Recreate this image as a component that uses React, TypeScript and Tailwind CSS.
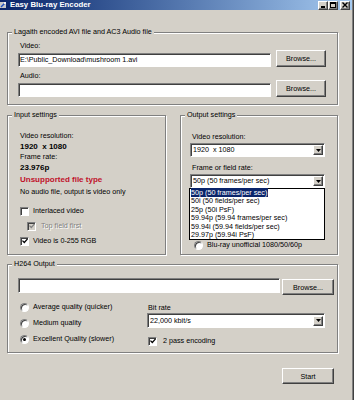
import React from "react";

const field =
  "bg-white border border-t-[#808080] border-l-[#808080] border-b-white border-r-white shadow-[inset_1px_1px_0_#404040]";
const raised =
  "bg-[#d4d0c8] border border-t-white border-l-white border-b-[#404040] border-r-[#404040] shadow-[inset_-1px_-1px_0_#808080]";

function Group({
  label,
  className = "",
  children,
}: {
  label: string;
  className?: string;
  children?: React.ReactNode;
}) {
  return (
    <div
      className={`relative border border-[#808080] shadow-[inset_1px_1px_0_#ffffff,1px_1px_0_#ffffff] ${className}`}
    >
      <span className="absolute left-[4px] top-[-6px] bg-[#d4d0c8] px-[2px] leading-[9px] whitespace-nowrap">
        {label}
      </span>
      {children}
    </div>
  );
}

function Button({ children, className = "" }: { children: React.ReactNode; className?: string }) {
  return (
    <div className={`${raised} flex items-center justify-center leading-[9px] ${className}`}>{children}</div>
  );
}

function Select({ value, className = "" }: { value: string; className?: string }) {
  return (
    <div className={`${field} flex items-center ${className}`}>
      <span className="flex-1 pl-[2px] leading-[10px] whitespace-pre overflow-hidden">{value}</span>
      <div className={`${raised} w-[10px] h-[10px] mr-[1px] flex items-center justify-center`}>
        <svg width="5" height="3" viewBox="0 0 5 3">
          <path d="M0 0H5L2.5 3Z" fill="#000" />
        </svg>
      </div>
    </div>
  );
}

function Check({ checked, disabled }: { checked?: boolean; disabled?: boolean }) {
  return (
    <div
      className={`w-[9px] h-[9px] shrink-0 ${
        disabled ? "bg-[#d4d0c8]" : "bg-white"
      } border border-t-[#808080] border-l-[#808080] border-b-white border-r-white shadow-[inset_1px_1px_0_#404040] flex items-center justify-center`}
    >
      {checked && (
        <svg width="6" height="6" viewBox="0 0 7 7">
          <path d="M0.5 3L2.7 5.3L6.5 1" stroke={disabled ? "#808080" : "#000"} strokeWidth="1.5" fill="none" />
        </svg>
      )}
    </div>
  );
}

function Radio({ checked }: { checked?: boolean }) {
  return (
    <div className="w-[9px] h-[9px] shrink-0 rounded-full bg-white border border-t-[#808080] border-l-[#808080] border-b-white border-r-white shadow-[inset_1px_1px_0_#404040] flex items-center justify-center">
      {checked && <div className="w-[3px] h-[3px] rounded-full bg-black" />}
    </div>
  );
}

function CapBtn({ children, className = "" }: { children: React.ReactNode; className?: string }) {
  return (
    <div className={`${raised} w-[10px] h-[9px] flex items-center justify-center ${className}`}>{children}</div>
  );
}

export default function App() {
  return (
    <div className="w-[354px] h-[400px] bg-[#d4d0c8] text-[7.2px] text-black overflow-hidden flex font-['Liberation_Sans',Arial,sans-serif]">
      <div className="w-[352px] flex flex-col">
        {/* Title bar */}
        <div className="h-[10px] bg-linear-to-r from-[#0a246a] to-[#a6caf0] flex items-center">
          <svg width="7" height="8" viewBox="0 0 7 8" className="shrink-0">
            <rect x="0" y="1" width="6" height="6" fill="#c8c8c8" />
            <path d="M1 6L5 2" stroke="#2050c0" strokeWidth="1.5" />
            <rect x="4" y="1" width="2" height="2" fill="#f0f0f0" />
          </svg>
          <span className="ml-[3px] text-white font-bold text-[7.8px] leading-[10px] whitespace-nowrap">
            Easy Blu-ray Encoder
          </span>
          <div className="ml-auto mr-[2px] flex items-center">
            <CapBtn>
              <svg width="5" height="6" viewBox="0 0 5 6">
                <rect x="0" y="4" width="4" height="2" fill="#000" />
              </svg>
            </CapBtn>
            <CapBtn>
              <svg width="6" height="6" viewBox="0 0 6 6">
                <rect x="0.5" y="0.5" width="5" height="5" fill="none" stroke="#000" />
                <rect x="0" y="0" width="6" height="2" fill="#000" />
              </svg>
            </CapBtn>
            <CapBtn className="ml-[2px]">
              <svg width="6" height="6" viewBox="0 0 6 6">
                <path d="M0.5 0.5L5.5 5.5M5.5 0.5L0.5 5.5" stroke="#000" strokeWidth="1.4" />
              </svg>
            </CapBtn>
          </div>
        </div>

        <div className="flex flex-col pl-[7px]">
          {/* Group 1 */}
          <Group
            label="Lagaith encoded AVI file and AC3 Audio file"
            className="mt-[22px] w-[331px] h-[73px] pt-[8px] pl-[10px] pr-[11px] flex flex-col"
          >
            <div className="ml-[2px] leading-[9px] h-[9px]">Video:</div>
            <div className="flex items-end gap-[5px] h-[17px]">
              <div className={`${field} flex-1 h-[14px] leading-[12px] pl-[1px] whitespace-nowrap`}>
                {"E:\\Public_Download\\mushroom 1.avi"}
              </div>
              <Button className="w-[50px] h-[17px]">Browse...</Button>
            </div>
            <div className="ml-[2px] mt-[4px] leading-[9px] h-[9px]">Audio:</div>
            <div className="flex items-end gap-[5px] h-[17px]">
              <div className={`${field} flex-1 h-[14px]`} />
              <Button className="w-[50px] h-[17px]">Browse...</Button>
            </div>
          </Group>

          {/* Row of two groups */}
          <div className="mt-[10px] flex gap-[14px]">
            <Group label="Input settings" className="w-[159px] h-[140px] pt-[14px] pl-[12px] flex flex-col">
              <div className="h-[11px] leading-[11px]">Video resolution:</div>
              <div className="h-[11px] leading-[11px] font-bold text-[8px] whitespace-pre">1920  x 1080</div>
              <div className="h-[10px] leading-[10px]">Frame rate:</div>
              <div className="h-[11px] leading-[11px] font-bold text-[8px]">23.976p</div>
              <div className="mt-[1px] h-[11px] leading-[11px] font-bold text-[8px] text-[#c0102a]">
                Unsupported file type
              </div>
              <div className="mt-[1px] h-[11px] leading-[11px]">No audio file, output is video only</div>
              <div className="mt-[9px] h-[10px] flex items-center gap-[4px]">
                <Check />
                <span className="leading-[10px]">Interlaced video</span>
              </div>
              <div className="mt-[5px] h-[10px] flex items-center gap-[5px] pl-[7px]">
                <Check checked disabled />
                <span className="leading-[10px] text-[#808080] [text-shadow:1px_1px_0_#fff]">Top field first</span>
              </div>
              <div className="mt-[5px] h-[10px] flex items-center gap-[4px]">
                <Check checked />
                <span className="leading-[10px]">Video is 0-255 RGB</span>
              </div>
            </Group>

            <Group label="Output settings" className="w-[158px] h-[140px] pt-[16px] pl-[9px] pr-[12px] flex flex-col">
              <div className="ml-[2px] h-[10px] leading-[10px]">Video resolution:</div>
              <Select value="1920  x 1080" className="mt-[1px] h-[14px]" />
              <div className="ml-[2px] mt-[6px] h-[10px] leading-[10px]">Frame or field rate:</div>
              <div className="relative mt-[1px]">
                <Select value="50p (50 frames/per sec)" className="h-[14px]" />
                <div className="absolute left-[-1px] right-0 top-full h-[52px] bg-white border border-black z-10 flex flex-col leading-[8.4px] whitespace-nowrap">
                  <div className="pl-[1px]">
                    <span className="bg-[#0a246a] text-white pr-[1px]">50p (50 frames/per sec)</span>
                  </div>
                  <div className="pl-[1px]">50i (50 fields/per sec)</div>
                  <div className="pl-[1px]">25p (50i PsF)</div>
                  <div className="pl-[1px]">59.94p (59.94 frames/per sec)</div>
                  <div className="pl-[1px]">59.94i (59.94 fields/per sec)</div>
                  <div className="pl-[1px]">29.97p (59.94i PsF)</div>
                </div>
              </div>
              <div className="mt-[52px] h-[10px] flex items-center gap-[4px] pl-[4px]">
                <Radio />
                <span className="leading-[10px] whitespace-nowrap">Blu-ray unofficial 1080/50/60p</span>
              </div>
            </Group>
          </div>

          {/* H264 */}
          <Group label="H264 Output" className="mt-[9px] w-[331px] h-[89px] pt-[13px] pl-[10px] pr-[3px] flex flex-col">
            <div className="flex items-start gap-[2px]">
              <div className={`${field} flex-1 h-[15px]`} />
              <Button className="mt-[1px] w-[52px] h-[16px]">Browse...</Button>
            </div>
            <div className="mt-[7px] flex">
              <div className="w-[127px] ml-[2px] flex flex-col gap-[6px]">
                <div className="h-[10px] flex items-center gap-[4px]">
                  <Radio />
                  <span className="leading-[10px]">Average quality (quicker)</span>
                </div>
                <div className="h-[10px] flex items-center gap-[4px]">
                  <Radio />
                  <span className="leading-[10px]">Medium quality</span>
                </div>
                <div className="h-[10px] flex items-center gap-[4px]">
                  <Radio checked />
                  <span className="leading-[10px]">Excellent Quality (slower)</span>
                </div>
              </div>
              <div className="w-[178px] flex flex-col">
                <div className="ml-[1px] mt-[1px] h-[10px] leading-[10px]">Bit rate</div>
                <Select value="22,000 kbit/s" className="h-[15px]" />
                <div className="mt-[8px] ml-[1px] h-[10px] flex items-center gap-[6px]">
                  <Check checked />
                  <span className="leading-[10px]">2 pass encoding</span>
                </div>
              </div>
            </div>
          </Group>

          <div className="mt-[15px] flex justify-end mr-[18px]">
            <Button className="w-[52px] h-[16px]">Start</Button>
          </div>
        </div>
      </div>
      <div className="w-[1px] h-full bg-[#808080]" />
      <div className="w-[1px] h-full bg-[#404040]" />
    </div>
  );
}
